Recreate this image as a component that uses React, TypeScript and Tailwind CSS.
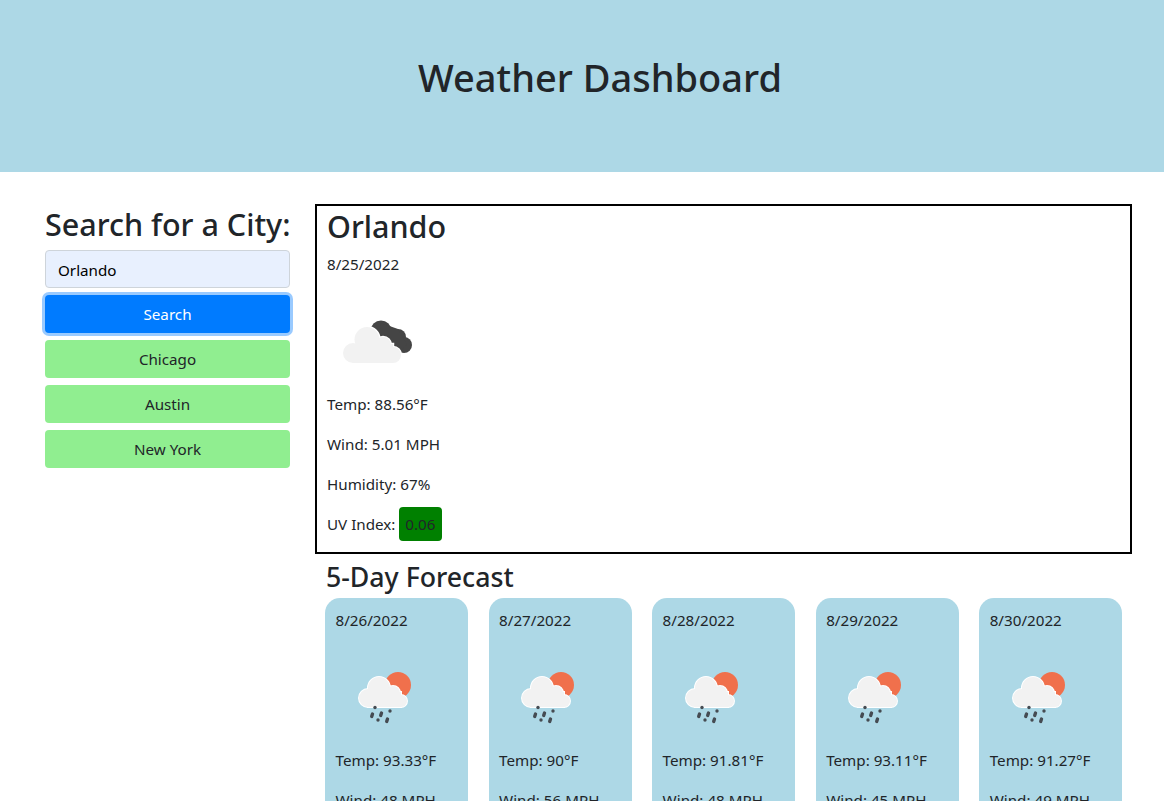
const forecast = [
  { date: "8/26/2022", temp: "93.33", wind: "48" },
  { date: "8/27/2022", temp: "90", wind: "56" },
  { date: "8/28/2022", temp: "91.81", wind: "48" },
  { date: "8/29/2022", temp: "93.11", wind: "45" },
  { date: "8/30/2022", temp: "91.27", wind: "49" },
];

const cities = ["Chicago", "Austin", "New York"];

function CloudShape() {
  return (
    <>
      <circle cx="26" cy="61" r="10" />
      <circle cx="40" cy="47.5" r="12.5" />
      <circle cx="56" cy="53" r="8" />
      <circle cx="66" cy="63" r="8" />
      <rect x="26" y="52" width="40" height="19" />
    </>
  );
}

function CloudIcon() {
  return (
    <svg viewBox="0 0 100 100" className="block h-[100px] w-[100px]">
      <g fill="#454545">
        <circle cx="54" cy="39" r="10.5" />
        <circle cx="71" cy="45" r="8" />
        <circle cx="77" cy="53" r="8" />
        <path d="M54 31 L71 37 L80 53 L70 62 L50 55z" />
      </g>
      <g fill="#fff" stroke="#fff" strokeWidth="2.5">
        <CloudShape />
      </g>
      <g fill="#f2f2f2">
        <CloudShape />
      </g>
    </svg>
  );
}

function RainShape() {
  return (
    <>
      <circle cx="32" cy="50" r="9" />
      <circle cx="43" cy="40" r="11" />
      <circle cx="57" cy="45" r="7" />
      <circle cx="65" cy="53" r="6" />
      <rect x="32" y="44" width="33" height="15" />
    </>
  );
}

function RainIcon() {
  return (
    <svg viewBox="0 0 100 100" className="block h-[100px] w-[100px]">
      <circle cx="62" cy="37" r="13" fill="#f0704c" />
      <g fill="#fff" stroke="#fff" strokeWidth="2">
        <RainShape />
      </g>
      <g fill="#f2f2f2">
        <RainShape />
      </g>
      <g stroke="#454b52" strokeWidth="3.4" strokeLinecap="round">
        <path d="M39 59.500v.1" />
        <path d="M36.500 66l-.8 2.500" />
        <path d="M45.500 65l-.8 2.500" />
        <path d="M54 63v.1" />
        <path d="M42 72v.1" />
        <path d="M51.500 71l-.8 2.500" />
      </g>
    </svg>
  );
}

function CityButton({ label }: { label: string }) {
  return (
    <button className="h-[38px] rounded bg-[#90ee90] text-[#212529]">
      {label}
    </button>
  );
}

export default function App() {
  return (
    <div className="h-[801px] overflow-hidden bg-white font-['Noto_Sans',sans-serif] text-[15.2px] leading-6 text-[#212529]">
      <header className="flex h-[172px] items-center justify-center bg-[#add8e6] pb-[18px] pl-9">
        <h1 className="text-[38px] leading-[48px] font-medium">Weather Dashboard</h1>
      </header>

      <main className="flex gap-[25px] pt-8 pl-[45px]">
        <section className="flex w-[245px] flex-col">
          <h2 className="mt-px mb-[7px] text-[30.5px] leading-[38px] font-medium whitespace-nowrap">
            Search for a City:
          </h2>
          <div className="flex flex-col gap-[7px]">
            <input
              readOnly
              value="Orlando"
              className="h-[38px] rounded border border-[#ced4da] bg-[#e8f0fe] px-3 pt-px text-black"
            />
            <button className="h-[38px] rounded bg-[#007bff] text-white shadow-[0_0_0_3px_rgba(0,123,255,0.4)]">
              Search
            </button>
            {cities.map((city) => (
              <CityButton key={city} label={city} />
            ))}
          </div>
        </section>

        <section className="w-[817px]">
          <div className="border-2 border-black px-2.5">
            <h2 className="mb-[7px] pt-px text-[30.5px] leading-[38.4px] font-medium">Orlando</h2>
            <p className="mb-4">8/25/2022</p>
            <CloudIcon />
            <p className="mb-4">Temp: 88.56°F</p>
            <p className="mb-4">Wind: 5.01 MPH</p>
            <p className="mb-4">Humidity: 67%</p>
            <p className="mb-4">
              UV Index: <span className="rounded bg-[#008000] px-1.5 py-[7px]">0.06</span>
            </p>
          </div>

          <h3 className="mt-1.5 mb-1 pl-[11px] text-[26.7px] leading-[34px] font-medium">
            5-Day Forecast
          </h3>
          <div className="flex gap-[20.3px] pl-2.5">
            {forecast.map((day) => (
              <div key={day.date} className="w-[143.25px] rounded-[15px] bg-[#add8e6] px-[10.5px] pt-2.5">
                <p className="mb-4">{day.date}</p>
                <RainIcon />
                <p className="mb-4">Temp: {day.temp}°F</p>
                <p className="mb-4 whitespace-nowrap">Wind: {day.wind} MPH</p>
              </div>
            ))}
          </div>
        </section>
      </main>
    </div>
  );
}
